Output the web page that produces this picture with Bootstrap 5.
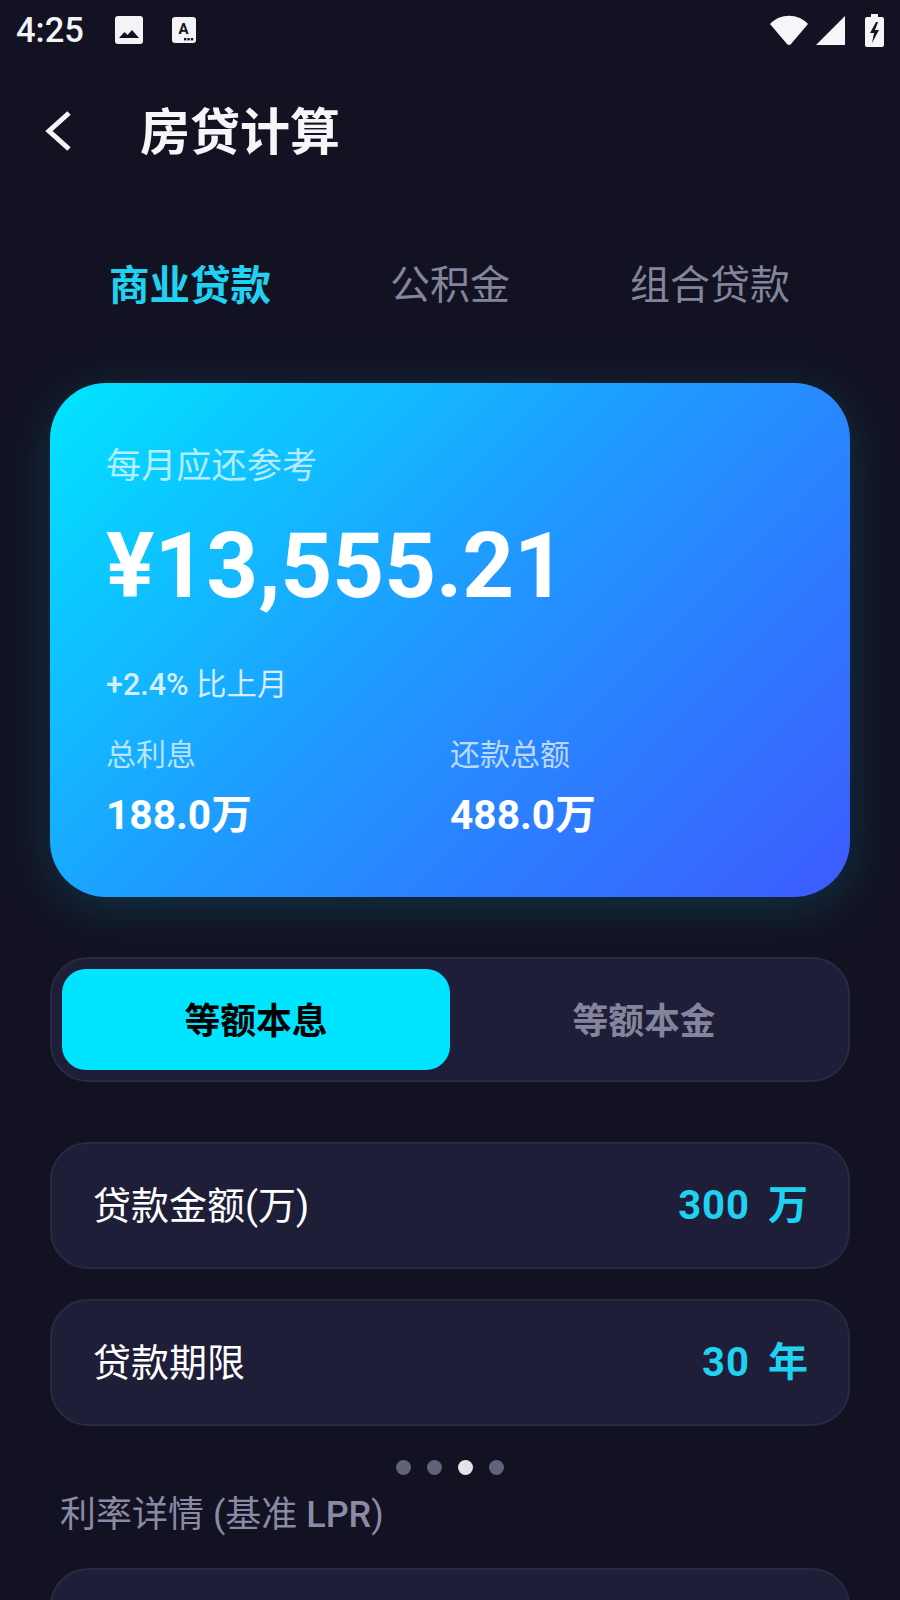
<!DOCTYPE html>
<html lang="zh-CN">
<head>
    <meta charset="UTF-8">
    <meta name="viewport" content="width=device-width, initial-scale=1.0">
    <title>房贷计算</title>
    <link href="https://cdn.jsdelivr.net/npm/bootstrap@5.3.0/dist/css/bootstrap.min.css" rel="stylesheet">
    <style>
        html, body {
            background-color: #121222;
            height: 1600px;
            overflow: hidden;
        }
        body {
            font-family: Roboto, "Noto Sans CJK SC", sans-serif;
            color: #fff;
        }
        .screen {
            height: 1600px;
            overflow: hidden;
        }
        .status-bar {
            height: 60px;
            padding: 0 16px;
        }
        .status-time {
            font-size: 34.5px;
            line-height: 1;
            font-weight: 500;
            color: #f4f4f6;
            margin-right: 31px;
        }
        .status-pic {
            margin-right: 29px;
        }
        .status-wifi {
            margin-right: 8px;
        }
        .status-signal {
            margin-right: 19px;
        }
        .status-letter {
            font-size: 15px;
            font-weight: 700;
            fill: #121222;
        }
        .top-title {
            height: 146px;
            padding-left: 44px;
        }
        .top-title h1 {
            font-size: 50px;
            font-weight: 700;
            line-height: 1;
            margin: 0 0 0 68px;
            color: #f6f6f8;
        }
        .loan-tabs {
            margin: 38px 60px 0;
            height: 84px;
        }
        .loan-tabs .nav-link {
            font-size: 40px;
            line-height: 1;
            padding: 0;
            color: #84849c;
        }
        .loan-tabs .nav-link.active {
            color: #1fd2f2;
            font-size: 40.5px;
            font-weight: 700;
        }
        .pay-card {
            margin: 55px 50px 0;
            height: 514px;
            border: 0;
            border-radius: 56px;
            padding: 63px 56px 0;
            color: #fff;
            background: linear-gradient(135deg, #00e5ff 0%, #2196ff 50%, #3d5afe 100%);
            box-shadow: 0 10px 50px rgba(0, 229, 255, 0.16);
        }
        .pay-label {
            font-size: 35.2px;
            line-height: 40px;
            color: rgba(255, 255, 255, 0.7);
        }
        .pay-amount {
            font-size: 90.4px;
            font-weight: 700;
            line-height: 100px;
            margin-top: 30px;
        }
        .pay-change {
            font-size: 30.5px;
            line-height: 36px;
            color: rgba(255, 255, 255, 0.82);
            margin-top: 51px;
        }
        .pay-change span {
            font-weight: 500;
        }
        .pay-stats {
            margin-top: 34px;
        }
        .stat-label {
            font-size: 30px;
            line-height: 36px;
            color: rgba(255, 255, 255, 0.7);
        }
        .stat-value {
            font-size: 40.7px;
            font-weight: 700;
            line-height: 44px;
            margin-top: 20px;
        }
        .stat-col {
            width: 345px;
        }
        .method-switch {
            margin: 60px 50px 0;
            height: 125px;
            padding: 10px;
            background-color: #1f1e38;
            border: 2px solid #2a2942;
            border-radius: 38px;
        }
        .method-switch .btn {
            flex: 1 1 0;
            border: 0;
            border-radius: 24px;
            font-size: 35.8px;
            font-weight: 700;
            color: #84849c;
            padding: 6px 0 0;
        }
        .method-switch .btn.active {
            background-color: #00e5ff;
            color: #000;
        }
        .field-row {
            margin: 0 50px;
            height: 127px;
            padding: 0 39px 0 41px;
            background-color: #1f1e38;
            border: 2px solid #2a2942;
            border-radius: 38px;
        }
        .field-label {
            font-size: 38px;
            line-height: 1;
        }
        .field-value {
            font-size: 40px;
            font-weight: 700;
            line-height: 1;
            color: #1fd2f2;
            letter-spacing: 1px;
            gap: 18px;
        }
        .amount-row {
            margin-top: 60px;
        }
        .term-row {
            margin-top: 30px;
        }
        .pager-dots {
            margin-top: 34px;
            height: 15px;
            gap: 16px;
        }
        .pager-dots span {
            width: 15px;
            height: 15px;
            border-radius: 50%;
            background-color: #62627a;
        }
        .pager-dots span.on {
            background-color: #e4e4e8;
        }
        .section-title {
            margin: 15px 0 0 60px;
            font-size: 36px;
            line-height: 50px;
            font-weight: 400;
            color: #8b8aa5;
        }
        .section-title span {
            font-weight: 500;
        }
        .rate-box {
            margin-top: 28px;
        }
    </style>
</head>
<body>

<div class="screen">
    <div class="status-bar d-flex align-items-center">
        <span class="status-time">4:25</span>
        <svg width="28" height="28" viewBox="0 0 28 28" class="status-pic">
            <rect width="28" height="28" rx="3" fill="#f4f4f6"/>
            <path d="M4 22 L9.5 16 L12.5 19 L17 14 L24 22 Z" fill="#121222"/>
        </svg>
        <svg width="24" height="26" viewBox="0 0 24 26">
            <rect width="24" height="26" rx="3" fill="#f4f4f6"/>
            <text x="11.5" y="17" text-anchor="middle" class="status-letter">A</text>
            <rect x="12" y="21" width="2.4" height="2.4" fill="#121222"/>
            <rect x="15.4" y="21" width="2.4" height="2.4" fill="#121222"/>
            <rect x="18.8" y="21" width="2.4" height="2.4" fill="#121222"/>
        </svg>
        <div class="ms-auto d-flex align-items-center">
            <svg width="38" height="31" viewBox="0 0 38 31" class="status-wifi">
                <path d="M0 9 C10 -2 28 -2 38 9 L21 29 Q19 31 17 29 Z" fill="#f6f6f8"/>
            </svg>
            <svg width="30" height="30" viewBox="0 0 30 30" class="status-signal">
                <path d="M0 30 L29 1 V30 Z" fill="#f6f6f8"/>
            </svg>
            <svg width="19" height="33" viewBox="0 0 19 33">
                <path d="M6 0 H13 V3 H17 Q19 3 19 5 V31 Q19 33 17 33 H2 Q0 33 0 31 V5 Q0 3 2 3 H6 Z" fill="#f6f6f8"/>
                <path d="M11 8 L5 19 H9 L7 29 L14 16 H10 L13 8 Z" fill="#121222"/>
            </svg>
        </div>
    </div>

    <div class="top-title d-flex align-items-center">
        <svg width="28" height="44" viewBox="0 0 28 44">
            <path d="M25 2 L5 20 L25 38" fill="none" stroke="#f6f6f8" stroke-width="5"/>
        </svg>
        <h1>房贷计算</h1>
    </div>

    <ul class="nav nav-justified loan-tabs align-items-center">
        <li class="nav-item"><a class="nav-link active" href="#">商业贷款</a></li>
        <li class="nav-item"><a class="nav-link" href="#">公积金</a></li>
        <li class="nav-item"><a class="nav-link" href="#">组合贷款</a></li>
    </ul>

    <div class="card pay-card">
        <div class="pay-label">每月应还参考</div>
        <div class="pay-amount">¥13,555.21</div>
        <div class="pay-change"><span>+2.4%</span> 比上月</div>
        <div class="pay-stats d-flex">
            <div class="stat-col">
                <div class="stat-label">总利息</div>
                <div class="stat-value">188.0万</div>
            </div>
            <div class="stat-col">
                <div class="stat-label">还款总额</div>
                <div class="stat-value">488.0万</div>
            </div>
        </div>
    </div>

    <div class="method-switch d-flex">
        <button type="button" class="btn active">等额本息</button>
        <button type="button" class="btn">等额本金</button>
    </div>

    <div class="field-row amount-row d-flex align-items-center justify-content-between">
        <span class="field-label">贷款金额(万)</span>
        <span class="field-value d-inline-flex"><span>300</span><span>万</span></span>
    </div>
    <div class="field-row term-row d-flex align-items-center justify-content-between">
        <span class="field-label">贷款期限</span>
        <span class="field-value d-inline-flex"><span>30</span><span>年</span></span>
    </div>

    <div class="pager-dots d-flex justify-content-center">
        <span></span><span></span><span class="on"></span><span></span>
    </div>

    <div class="section-title">利率详情 (基准 <span>LPR</span>)</div>

    <div class="field-row rate-box"></div>
</div>

<script src="https://cdn.jsdelivr.net/npm/bootstrap@5.3.0/dist/js/bootstrap.bundle.min.js"></script>
</body>
</html>
